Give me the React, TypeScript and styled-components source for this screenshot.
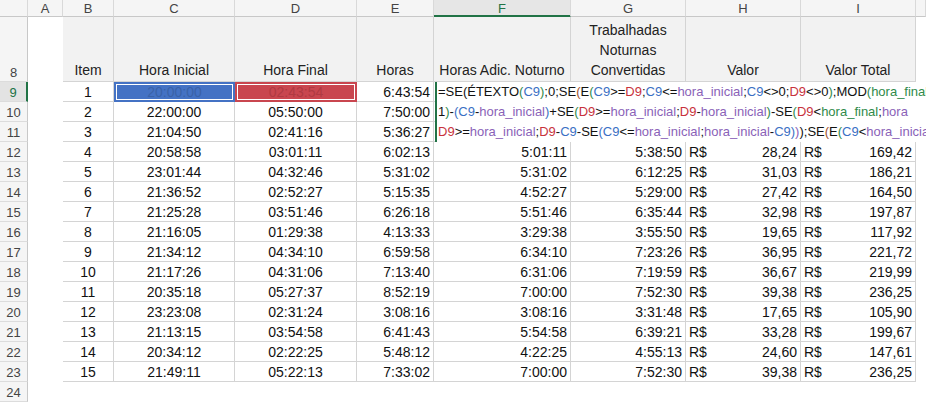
import * as React from 'react';
import styled, { createGlobalStyle, css } from 'styled-components';

const Global = createGlobalStyle`
  body { margin: 0; background: #fff; font-family: "Liberation Sans", Arial, sans-serif; }
`;

const COLS = ['A', 'B', 'C', 'D', 'E', 'F', 'G', 'H', 'I', ''];

const Sheet = styled.div`
  position: relative;
  display: grid;
  grid-template-columns: 28px 35px 51px 121px 122px 77px 137px 115px 115px 115px 1fr;
  grid-template-rows: 17px 65px repeat(16, 20px);
  width: 926px;
  height: 404px;
  overflow: hidden;
  font-size: 14px;
  color: #111;
`;

const ColHead = styled.div<{ $sel?: boolean }>`
  border-right: 1px solid #d9d9d9;
  border-bottom: 1px solid ${p => (p.$sel ? '#217346' : '#c8c8c8')};
  box-shadow: ${p => (p.$sel ? 'inset 0 -1px 0 #217346' : 'none')};
  color: ${p => (p.$sel ? '#217346' : '#444')};
  display: flex;
  align-items: center;
  justify-content: center;
  font-size: 13px;
  background: ${p => (p.$sel ? '#e6e6e6' : '#f5f5f5')};
`;

const RowHead = styled.div<{ $sel?: boolean }>`
  background: ${p => (p.$sel ? '#e3e3e3' : '#f5f5f5')};
  border-bottom: 1px solid #dcdcdc;
  border-right: ${p => (p.$sel ? '2px solid #217346' : '1px solid #c8c8c8')};
  color: ${p => (p.$sel ? '#217346' : '#444')};
  display: flex;
  align-items: flex-end;
  justify-content: center;
  padding-bottom: 1px;
  font-size: 13px;
  box-sizing: border-box;
`;

const Cell = styled.div<{ $align?: string; $head?: boolean; $grid?: boolean; $fill?: string }>`
  box-sizing: border-box;
  display: flex;
  align-items: flex-end;
  justify-content: ${p => p.$align || 'flex-end'};
  padding: 0 3px 1px;
  white-space: nowrap;
  ${p => p.$grid && css`
    border-right: 1px solid #d4d4d4;
    border-bottom: 1px solid #d4d4d4;
  `}
  ${p => p.$head && css`
    background: #f2f2f2;
    flex-direction: column;
    justify-content: flex-end;
    align-items: center;
    text-align: center;
    line-height: 20px;
    color: #222;
  `}
  ${p => p.$fill && css`
    background: ${p.$fill};
    box-shadow: inset 0 0 0 1px ${p.$fill}, inset 0 0 0 2px #fff;
    border: 1px solid ${p.$fill};
    justify-content: center;
  `}
`;

const Money = styled.span`
  display: flex;
  justify-content: space-between;
  width: 100%;
`;

const Formula = styled.div`
  position: absolute;
  left: 435px;
  top: 82px;
  right: 0;
  height: 60px;
  background: #fff;
  border-left: 2px solid #217346;
  font-size: 13px;
  line-height: 20px;
  white-space: nowrap;
  overflow: hidden;
  padding-left: 1px;
`;

const Tok = styled.span<{ $c?: string }>`
  color: ${p => p.$c || '#111'};
`;

const B = '#3a6fc4';
const R = '#c8323c';
const P = '#8a62b8';
const G = '#2f8a4a';
const BR = '#a0522d';

const lines: [string, string?][][] = [
  [['=SE(ÉTEXTO'], ['(', G], ['C9', B], [')', G], [';0;SE'], ['(', BR], ['E'], ['(', G], ['C9', B], ['>='], ['D9', R], [';'], ['C9', B], ['<='], ['hora_inicial', P], [';'], ['C9', B], ['<>0;'], ['D9', R], ['<>0'], [')', G], [';MOD'], ['(', G], ['hora_final', G]],
  [['1'], [')', G], ['-'], ['(', B], ['C9', B], ['-'], ['hora_inicial', P], [')', B], ['+SE'], ['(', G], ['D9', R], ['>='], ['hora_inicial', P], [';'], ['D9', R], ['-'], ['hora_inicial', P], [')', G], ['-SE'], ['(', G], ['D9', R], ['<'], ['hora_final', G], [';'], ['hora', P]],
  [['D9', R], ['>='], ['hora_inicial', P], [';'], ['D9', R], ['-'], ['C9', B], ['-SE'], ['(', B], ['C9', B], ['<='], ['hora_inicial', P], [';'], ['hora_inicial', P], ['-'], ['C9', B], [')', B], [')', P], [');SE'], ['(', BR], ['E'], ['(', G], ['C9', B], ['<'], ['hora_inicial', P]],
];

const data: string[][] = [
  ['1', '20:00:00', '02:43:54', '6:43:54', '', '', '', ''],
  ['2', '22:00:00', '05:50:00', '7:50:00', '', '', '', ''],
  ['3', '21:04:50', '02:41:16', '5:36:27', '', '', '', ''],
  ['4', '20:58:58', '03:01:11', '6:02:13', '5:01:11', '5:38:50', '28,24', '169,42'],
  ['5', '23:01:44', '04:32:46', '5:31:02', '5:31:02', '6:12:25', '31,03', '186,21'],
  ['6', '21:36:52', '02:52:27', '5:15:35', '4:52:27', '5:29:00', '27,42', '164,50'],
  ['7', '21:25:28', '03:51:46', '6:26:18', '5:51:46', '6:35:44', '32,98', '197,87'],
  ['8', '21:16:05', '01:29:38', '4:13:33', '3:29:38', '3:55:50', '19,65', '117,92'],
  ['9', '21:34:12', '04:34:10', '6:59:58', '6:34:10', '7:23:26', '36,95', '221,72'],
  ['10', '21:17:26', '04:31:06', '7:13:40', '6:31:06', '7:19:59', '36,67', '219,99'],
  ['11', '20:35:18', '05:27:37', '8:52:19', '7:00:00', '7:52:30', '39,38', '236,25'],
  ['12', '23:23:08', '02:31:24', '3:08:16', '3:08:16', '3:31:48', '17,65', '105,90'],
  ['13', '21:13:15', '03:54:58', '6:41:43', '5:54:58', '6:39:21', '33,28', '199,67'],
  ['14', '20:34:12', '02:22:25', '5:48:12', '4:22:25', '4:55:13', '24,60', '147,61'],
  ['15', '21:49:11', '05:22:13', '7:33:02', '7:00:00', '7:52:30', '39,38', '236,25'],
];

const heads = ['Item', 'Hora Inicial', 'Hora Final', 'Horas', 'Horas Adic. Noturno', 'Trabalhadas\nNoturnas\nConvertidas', 'Valor', 'Valor Total'];

export default function App() {
  return (
    <>
      <Global />
      <Sheet>
        <ColHead />
        {COLS.map((c, i) => <ColHead key={i} $sel={c === 'F'}>{c}</ColHead>)}

        <RowHead>8</RowHead>
        <Cell />
        {heads.map((h, i) => (
          <Cell key={i} $head $grid>
            {h.split('\n').map((t, j) => <span key={j}>{t}</span>)}
          </Cell>
        ))}
        <Cell />

        {data.map((r, ri) => (
          <React.Fragment key={ri}>
            <RowHead $sel={ri === 0}>{ri + 9}</RowHead>
            <Cell />
            <Cell $grid $align="center">{r[0]}</Cell>
            <Cell $grid $align="center" $fill={ri === 0 ? '#4472c4' : undefined} style={ri === 0 ? { color: '#3a62a8' } : undefined}>{r[1]}</Cell>
            <Cell $grid $align="center" $fill={ri === 0 ? '#c9464f' : undefined} style={ri === 0 ? { color: '#b03a42' } : undefined}>{r[2]}</Cell>
            <Cell $grid>{r[3]}</Cell>
            <Cell $grid>{r[4]}</Cell>
            <Cell $grid>{r[5]}</Cell>
            <Cell $grid>{r[6] && <Money><span>R$</span><span>{r[6]}</span></Money>}</Cell>
            <Cell $grid>{r[7] && <Money><span>R$</span><span>{r[7]}</span></Money>}</Cell>
            <Cell />
          </React.Fragment>
        ))}
        <RowHead>24</RowHead>

        <Formula>
          {lines.map((l, i) => (
            <div key={i}>{l.map(([t, c], j) => <Tok key={j} $c={c}>{t}</Tok>)}</div>
          ))}
        </Formula>
      </Sheet>
    </>
  );
}
